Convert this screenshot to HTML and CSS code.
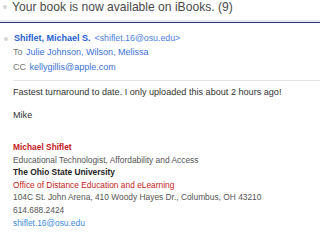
FILE: index.html
```html
<!DOCTYPE html>
<html lang="en">
<head>
  <meta charset="UTF-8">
  <meta name="viewport" content="width=device-width, initial-scale=1.0">
  <title>Your book is now available on iBooks.</title>
  <link rel="stylesheet" href="styles.css">
</head>
<body>
  <div class="subject">
    <span class="dot"></span>
    <span class="subject-text">Your book is now available on iBooks. (9)</span>
  </div>
  <div class="rule"></div>

  <div class="message">
    <div class="from">
      <span class="dot"></span>
      <span class="sender">Shiflet, Michael S.</span>
      <span class="sender-addr">&lt;shiflet.16@osu.edu&gt;</span>
    </div>
    <div class="row"><span class="label">To</span> <span class="names">Julie Johnson, Wilson, Melissa</span></div>
    <div class="row"><span class="label">CC</span> <span class="names">kellygillis@apple.com</span></div>

    <hr class="divider">

    <div class="body">
      <p>Fastest turnaround to date. I only uploaded this about 2 hours ago!</p>
      <p>Mike</p>

      <div class="sig">
        <div class="sig-name">Michael Shiflet</div>
        <div>Educational Technologist, Affordability and Access</div>
        <div class="sig-org">The Ohio State University</div>
        <div class="sig-dept">Office of Distance Education and eLearning</div>
        <div>104C St. John Arena, 410 Woody Hayes Dr., Columbus, OH 43210</div>
        <div>614.688.2424</div>
        <div class="sig-mail">shiflet.16@osu.edu</div>
      </div>
    </div>
  </div>
</body>
</html>
```

FILE: styles.css
```css
body {
  font-family: 'Liberation Sans', Arial, sans-serif;
  background-color: #ffffff;
  color: #333;
  margin: 0;
  padding: 0;
}

.dot {
  display: inline-block;
  width: 4px;
  height: 4px;
  border-radius: 50%;
  background-color: #d6d6d6;
}

.subject {
  display: flex;
  align-items: center;
  gap: 5px;
  padding: 0 0 6px 3px;
  height: 14px;
}

.subject-text {
  font-size: 12.1px;
  line-height: 14px;
  color: #4a4a4a;
}

.rule {
  height: 2px;
  background-color: #e6e8ef;
  border-bottom: 1.5px solid #2e3a6c;
}

.message {
  padding: 9px 0 0 13px;
  font-size: 9px;
}

.from {
  display: flex;
  align-items: center;
  gap: 4px;
  margin-left: -9px;
  line-height: 13px;
}

.from .dot {
  margin-right: 2px;
}

.sender {
  font-weight: bold;
  font-size: 9px;
  color: #1d60d2;
}

.sender-addr {
  font-size: 8.8px;
  color: #4b80dc;
}

.row {
  line-height: 14.5px;
}

.label {
  color: #777;
}

.names {
  color: #3a72d8;
  margin-left: 1px;
}

.divider {
  border: none;
  border-top: 1px solid #e4e4e4;
  margin: 6px 0 0 0;
}

.body {
  padding-top: 5px;
  font-size: 9.1px;
  line-height: 12.5px;
  color: #333;
}

.body p {
  margin: 0 0 10px 0;
}

.sig {
  margin-top: 20px;
  font-size: 8.4px;
  line-height: 12.6px;
  color: #555;
}

.sig-name {
  color: #c41a1a;
  font-weight: bold;
}

.sig-org {
  font-weight: bold;
  color: #222;
}

.sig-dept {
  color: #c41a1a;
}

.sig-mail {
  color: #3d8ae0;
}
```
